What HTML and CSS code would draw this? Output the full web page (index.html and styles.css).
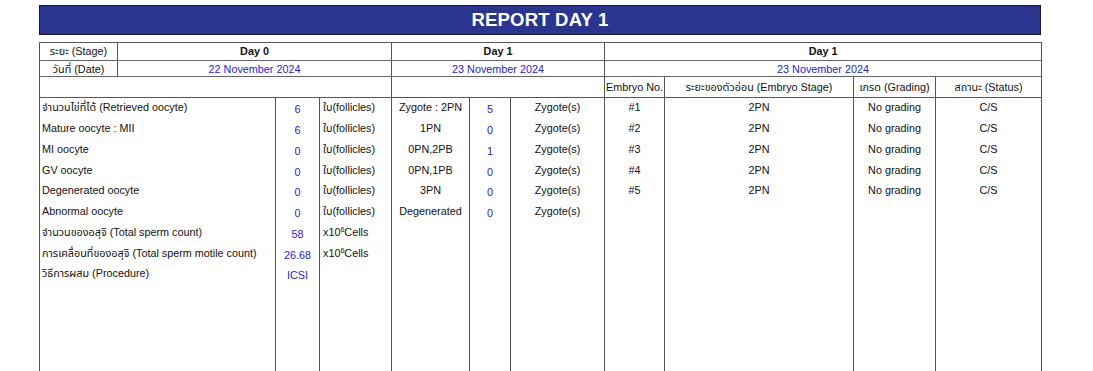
FILE: index.html
```html
<!DOCTYPE html>
<html lang="th">
<head>
<meta charset="utf-8">
<title>Report Day 1</title>
<link rel="stylesheet" href="styles.css">
</head>
<body>
<div class="page">
  <div class="title-bar">REPORT DAY 1</div>
  <table class="report">
    <colgroup>
      <col class="w78"><col class="w158"><col class="w44"><col class="w72">
      <col class="w78"><col class="w41"><col class="w94">
      <col class="w60"><col class="w189"><col class="w82"><col class="w106">
    </colgroup>
    <tr class="r-stage">
      <td class="c">ระยะ (Stage)</td>
      <td colspan="3" class="c b">Day 0</td>
      <td colspan="3" class="c b">Day 1</td>
      <td colspan="4" class="c b">Day 1</td>
    </tr>
    <tr class="r-date">
      <td class="c">วันที่ (Date)</td>
      <td colspan="3" class="c blue">22 November 2024</td>
      <td colspan="3" class="c blue">23 November 2024</td>
      <td colspan="4" class="c blue">23 November 2024</td>
    </tr>
    <tr class="r-head">
      <td colspan="4"></td>
      <td colspan="3"></td>
      <td class="c nw">Embryo No.</td>
      <td class="c nw">ระยะของตัวอ่อน (Embryo Stage)</td>
      <td class="c nw">เกรด (Grading)</td>
      <td class="c nw">สถานะ (Status)</td>
    </tr>
    <tr class="data">
      <td colspan="2" class="l">จำนวนไข่ที่ได้ (Retrieved oocyte)</td>
      <td class="n">6</td><td class="u">ใบ(follicles)</td>
      <td class="c">Zygote : 2PN</td><td class="n">5</td><td class="c">Zygote(s)</td>
      <td class="c">#1</td><td class="c">2PN</td><td class="c">No grading</td><td class="c">C/S</td>
    </tr>
    <tr class="data">
      <td colspan="2" class="l">Mature oocyte : MII</td>
      <td class="n">6</td><td class="u">ใบ(follicles)</td>
      <td class="c">1PN</td><td class="n">0</td><td class="c">Zygote(s)</td>
      <td class="c">#2</td><td class="c">2PN</td><td class="c">No grading</td><td class="c">C/S</td>
    </tr>
    <tr class="data">
      <td colspan="2" class="l">MI oocyte</td>
      <td class="n">0</td><td class="u">ใบ(follicles)</td>
      <td class="c">0PN,2PB</td><td class="n">1</td><td class="c">Zygote(s)</td>
      <td class="c">#3</td><td class="c">2PN</td><td class="c">No grading</td><td class="c">C/S</td>
    </tr>
    <tr class="data">
      <td colspan="2" class="l">GV oocyte</td>
      <td class="n">0</td><td class="u">ใบ(follicles)</td>
      <td class="c">0PN,1PB</td><td class="n">0</td><td class="c">Zygote(s)</td>
      <td class="c">#4</td><td class="c">2PN</td><td class="c">No grading</td><td class="c">C/S</td>
    </tr>
    <tr class="data">
      <td colspan="2" class="l">Degenerated oocyte</td>
      <td class="n">0</td><td class="u">ใบ(follicles)</td>
      <td class="c">3PN</td><td class="n">0</td><td class="c">Zygote(s)</td>
      <td class="c">#5</td><td class="c">2PN</td><td class="c">No grading</td><td class="c">C/S</td>
    </tr>
    <tr class="data">
      <td colspan="2" class="l">Abnormal oocyte</td>
      <td class="n">0</td><td class="u">ใบ(follicles)</td>
      <td class="c">Degenerated</td><td class="n">0</td><td class="c">Zygote(s)</td>
      <td></td><td></td><td></td><td></td>
    </tr>
    <tr class="data">
      <td colspan="2" class="l">จำนวนของอสุจิ (Total sperm count)</td>
      <td class="n">58</td><td class="u">x10<sup>6</sup>Cells</td>
      <td></td><td></td><td></td>
      <td></td><td></td><td></td><td></td>
    </tr>
    <tr class="data">
      <td colspan="2" class="l">การเคลื่อนที่ของอสุจิ (Total sperm motile count)</td>
      <td class="n">26.68</td><td class="u">x10<sup>6</sup>Cells</td>
      <td></td><td></td><td></td>
      <td></td><td></td><td></td><td></td>
    </tr>
    <tr class="data">
      <td colspan="2" class="l">วิธีการผสม (Procedure)</td>
      <td class="n">ICSI</td><td class="u"></td>
      <td></td><td></td><td></td>
      <td></td><td></td><td></td><td></td>
    </tr>
    <tr class="data filler">
      <td colspan="2"></td><td></td><td></td>
      <td></td><td></td><td></td>
      <td></td><td></td><td></td><td></td>
    </tr>
  </table>
</div>
</body>
</html>
```

FILE: styles.css
```css
html, body {
  margin: 0;
  padding: 0;
  background: #ffffff;
}

body {
  font-family: "Liberation Sans", "Noto Sans Thai", "DejaVu Sans", sans-serif;
  font-size: 10.8px;
  color: #111111;
  overflow: hidden;
}

.page {
  width: 1002px;
  margin: 5px 0 0 39px;
}

.title-bar {
  box-sizing: border-box;
  height: 30px;
  background: #2a3590;
  border: 1px solid #1c1c3a;
  color: #ffffff;
  font-weight: bold;
  font-size: 18.5px;
  line-height: 28px;
  text-align: center;
  letter-spacing: 0.2px;
}

.report {
  margin-top: 7px;
  width: 1002px;
  table-layout: fixed;
  border-collapse: collapse;
  border: 1px solid #555555;
}

.w78 { width: 78px; }
.w158 { width: 158px; }
.w44 { width: 44px; }
.w72 { width: 72px; }
.w41 { width: 41px; }
.w94 { width: 94px; }
.w60 { width: 60px; }
.w189 { width: 189px; }
.w82 { width: 82px; }
.w106 { width: 106px; }

.report td {
  padding: 0 2px;
  white-space: nowrap;
  overflow: hidden;
  vertical-align: middle;
  border-left: 1px solid #555555;
  border-right: 1px solid #555555;
}

.r-stage td {
  height: 17px;
  border-bottom: 1px solid #666666;
  line-height: 15px;
}

.r-date td {
  height: 15px;
  border-bottom: 1px solid #666666;
  line-height: 14px;
}

.r-head td {
  height: 20px;
  border-bottom: 1px solid #555555;
  line-height: 14px;
  padding: 0;
}

.data td {
  height: 18.75px;
  line-height: 14px;
  padding-top: 0;
  padding-bottom: 2px;
}

.data.filler td {
  height: 140px;
}

.c { text-align: center; }
.b { font-weight: bold; }
.l { text-align: left; }
.nw { white-space: nowrap; }

.blue { color: #2323d2; }

.report td.n {
  text-align: center;
  color: #2323d2;
  padding-top: 2px;
  padding-bottom: 0;
  height: 18.75px;
}

.report td.u {
  text-align: left;
  padding-left: 3px;
}

sup {
  font-size: 7px;
  line-height: 0;
  vertical-align: 4px;
}
```
